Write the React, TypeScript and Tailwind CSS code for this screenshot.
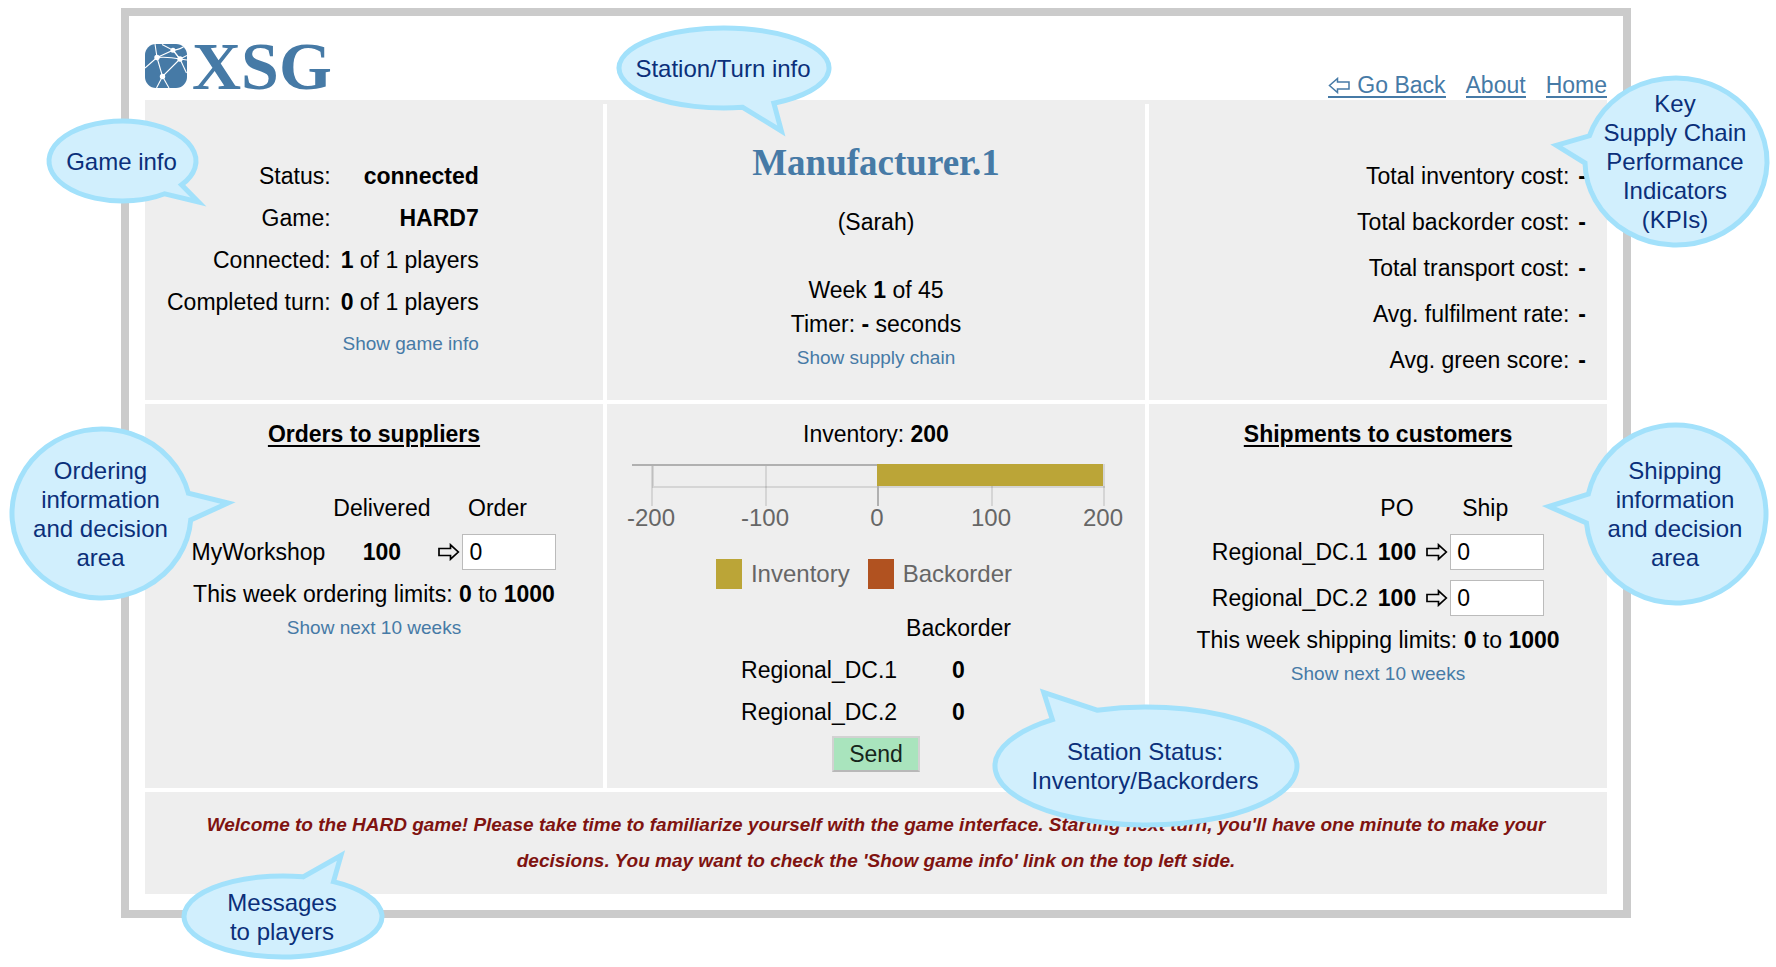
import React from "react";

type Point = [number, number];

interface CalloutProps {
  className: string;
  width: number;
  height: number;
  /** Points where the tail leaves the ellipse, clockwise, and its tip. */
  from: Point;
  to: Point;
  tip: Point;
  lines: string[];
}

const STROKE = 5;

function Callout({ className, width, height, from, to, tip, lines }: CalloutProps) {
  const cx = width / 2;
  const cy = height / 2;
  const rx = cx - 3;
  const ry = cy - 3;
  const snap = ([x, y]: Point): Point => {
    const a = Math.atan2((y - cy) / ry, (x - cx) / rx);
    return [cx + rx * Math.cos(a), cy + ry * Math.sin(a)];
  };
  const start = snap(to);
  const end = snap(from);
  const d = `M${start} A${rx} ${ry} 0 1 1 ${end} L${tip} Z`;

  return (
    <div
      className={`absolute flex items-center justify-center pr-[2px] ${className}`}
      style={{ width, height }}
    >
      <svg
        className="absolute inset-0 overflow-visible"
        width={width}
        height={height}
        viewBox={`0 0 ${width} ${height}`}
        aria-hidden="true"
      >
        <path d={d} fill="#d1effd" stroke="#a2e1fb" strokeWidth={STROKE} strokeMiterlimit={10} />
      </svg>
      <p className="relative text-center text-[24px] leading-[29px] whitespace-nowrap text-[#0b2f7a]">
        {lines.map((line) => (
          <span key={line} className="block">
            {line}
          </span>
        ))}
      </p>
    </div>
  );
}

function Logo() {
  return (
    <svg width="42" height="44" viewBox="0 0 42 44" aria-hidden="true">
      <defs>
        <clipPath id="tile">
          <rect width="42" height="44" rx="11" />
        </clipPath>
      </defs>
      <g clipPath="url(#tile)">
        <rect width="42" height="44" fill="#467aa6" />
        <g fill="none" stroke="#fff" strokeWidth="1.1">
          <path d="M12 13.5 28 6.2 35 15Q23 12.500 12 13.500" />
          <path d="M10 0 12 13.500 0 24" />
          <path d="M12 13.500 17.500 32.500 35 15" />
          <path d="M11.500 44 17.500 32.500 24 44" />
          <path d="M17 0.500 28 6.200Q36 5.500 40 1.500" />
          <path d="M28 6.200 35 15 42 11.500" />
          <path d="M35 15 42 16" />
          <path d="M35 15 41.500 29" />
        </g>
        <g fill="#fff">
          <circle cx="12" cy="13.500" r="2.700" />
          <circle cx="28" cy="6.200" r="2.500" />
          <circle cx="35" cy="15" r="2.700" />
          <circle cx="17.500" cy="32.500" r="2.700" />
        </g>
      </g>
    </svg>
  );
}

function Arrow() {
  return (
    <svg width="22" height="18" viewBox="0 0 22 18" aria-hidden="true">
      <path
        d="M1 5.500H12.500V1.800L20.300 9L12.500 16.200V12.500H1Z"
        fill="none"
        stroke="#000"
        strokeWidth="1.700"
      />
    </svg>
  );
}

function BackArrow() {
  return (
    <svg className="mr-[7px] inline-block align-baseline" width="22" height="17" viewBox="0 0 22 17" aria-hidden="true">
      <path
        d="M21 5H9.500V1.500L1.500 8.500L9.500 15.500V12H21Z"
        fill="none"
        stroke="#467aa6"
        strokeWidth="1.500"
      />
    </svg>
  );
}

function SmallLink({ children }: { children: React.ReactNode }) {
  return (
    <a href="#" className="text-[19px] text-[#467aa6]">
      {children}
    </a>
  );
}

interface OrderTableProps {
  title: string;
  amountHeader: string;
  inputHeader: string;
  rows: string[];
  verb: string;
}

function OrderPanel({ title, amountHeader, inputHeader, rows, verb }: OrderTableProps) {
  return (
    <section className="flex flex-col items-center bg-[#eee] pt-[13px]">
      <h2 className="leading-[34px] font-bold underline decoration-2 underline-offset-3">{title}</h2>
      <table className="mt-9 mb-[2px]">
        <thead>
          <tr className="h-[42px]">
            <td />
            <th className="px-2 py-0 font-normal">{amountHeader}</th>
            <th className="p-0 font-normal">{inputHeader}</th>
          </tr>
        </thead>
        <tbody>
          {rows.map((name) => (
            <tr key={name} className="h-[46px]">
              <td className="p-0">
                <label htmlFor={`${verb}-${name}`}>{name}</label>
              </td>
              <td className="px-[10px] py-0 text-center font-bold">100</td>
              <td className="p-0">
                <div className="flex items-center gap-[2px]">
                  <Arrow />
                  <input
                    id={`${verb}-${name}`}
                    type="text"
                    defaultValue="0"
                    className="h-9 w-[94px] border border-[#bbb] bg-white px-[6px]"
                  />
                </div>
              </td>
            </tr>
          ))}
        </tbody>
      </table>
      <p className="leading-[34px]">
        This week {verb} limits: <b>0</b> to <b>1000</b>
      </p>
      <p className="leading-[30px]">
        <SmallLink>Show next 10 weeks</SmallLink>
      </p>
    </section>
  );
}

const TICKS = [
  { x: 32, label: "-200" },
  { x: 146, label: "-100" },
  { x: 258, label: "0" },
  { x: 372, label: "100" },
  { x: 484, label: "200" },
];

function InventoryChart() {
  return (
    <svg
      className="mt-[13px]"
      width="512"
      height="68"
      viewBox="0 0 512 68"
      role="img"
      aria-label="Inventory level"
    >
      <g fill="#000" fillOpacity="0.1">
        <rect x="31" y="0" width="2" height="42" />
        <rect x="145" y="0" width="2" height="42" />
        <rect x="371" y="0" width="2" height="42" />
        <rect x="483" y="0" width="2" height="42" />
        <rect x="32" y="22" width="453" height="2" />
        <rect x="32" y="2" width="2" height="20" />
      </g>
      <rect x="12" y="0" width="246" height="2" fill="#b0b0b0" />
      <rect x="257" y="0" width="2" height="42" fill="#b0b0b0" />
      <rect x="257" y="0" width="226" height="22" fill="#bba537" />
      {TICKS.map((t) => (
        <text key={t.label} x={t.x - 1} y="62" textAnchor="middle" fontSize="24" fill="#666">
          {t.label}
        </text>
      ))}
    </svg>
  );
}

const KPIS = [
  "Total inventory cost:",
  "Total backorder cost:",
  "Total transport cost:",
  "Avg. fulfilment rate:",
  "Avg. green score:",
];

export default function App() {
  return (
    <div className="relative min-h-screen bg-white py-2 pr-[145px] pl-[121px] font-['Liberation_Sans',Arial,sans-serif] text-[23px] text-black">
      <main className="border-8 border-[#cbcbcb] p-4 pt-0">
        <header className="flex h-[84px] items-end justify-between">
          <div className="flex items-center gap-[5px] text-[#467aa6]">
            <Logo />
            <span className="font-['Liberation_Serif',serif] text-[68px] leading-[68px] font-bold">XSG</span>
          </div>
          <nav className="flex gap-5 pb-[2px] leading-[21px] text-[#467aa6]">
            <a href="#" className="flex items-center border-b-2 border-[#467aa6]">
              <BackArrow />
              Go Back
            </a>
            <a href="#" className="border-b-2 border-[#467aa6]">
              About
            </a>
            <a href="#" className="border-b-2 border-[#467aa6]">
              Home
            </a>
          </nav>
        </header>

        <div className="h-1 bg-[#eee]" />

        <div className="grid grid-cols-[458fr_538fr_458fr] grid-rows-[296px_384px_auto] gap-1">
          <section className="bg-[#eee] pt-[51px] pl-[22px]">
            <table className="text-right leading-[42px]">
              <tbody>
                <tr>
                  <td className="p-0 pr-[10px]">Status:</td>
                  <td className="p-0 font-bold">connected</td>
                </tr>
                <tr>
                  <td className="p-0 pr-[10px]">Game:</td>
                  <td className="p-0 font-bold">HARD7</td>
                </tr>
                <tr>
                  <td className="p-0 pr-[10px]">Connected:</td>
                  <td className="p-0">
                    <b>1</b> of 1 players
                  </td>
                </tr>
                <tr>
                  <td className="p-0 pr-[10px]">Completed turn:</td>
                  <td className="p-0">
                    <b>0</b> of 1 players
                  </td>
                </tr>
                <tr>
                  <td />
                  <td className="p-0 leading-[38px]">
                    <SmallLink>Show game info</SmallLink>
                  </td>
                </tr>
              </tbody>
            </table>
          </section>

          <section className="bg-[#eee] pt-[39px] text-center leading-[34px]">
            <h1 className="mb-[22px] font-['Liberation_Serif',serif] text-[37px] leading-10 font-bold text-[#467aa6]">
              Manufacturer.1
            </h1>
            <p className="mb-[34px]">(Sarah)</p>
            <p>
              Week <b>1</b> of 45
            </p>
            <p>
              Timer: <b>-</b> seconds
            </p>
            <p className="leading-[30px]">
              <SmallLink>Show supply chain</SmallLink>
            </p>
          </section>

          <section className="flex justify-end bg-[#eee] pt-[49px] pr-[21px]">
            <table className="self-start text-right leading-[46px]">
              <tbody>
                {KPIS.map((kpi) => (
                  <tr key={kpi}>
                    <td className="p-0 pr-[9px]">{kpi}</td>
                    <td className="p-0 font-bold">-</td>
                  </tr>
                ))}
              </tbody>
            </table>
          </section>

          <OrderPanel
            title="Orders to suppliers"
            amountHeader="Delivered"
            inputHeader="Order"
            rows={["MyWorkshop"]}
            verb="ordering"
          />

          <section className="flex flex-col items-center bg-[#eee] pt-[13px]">
            <p className="leading-[34px]">
              Inventory: <b>200</b>
            </p>
            <InventoryChart />
            <div className="mt-[27px] flex h-[30px] items-center gap-[18px] pr-6 text-[24px] text-[#666]">
              <span className="flex items-center gap-[9px]">
                <span className="h-[30px] w-[26px] bg-[#bba537]" />
                Inventory
              </span>
              <span className="flex items-center gap-[9px]">
                <span className="h-[30px] w-[26px] bg-[#b15220]" />
                Backorder
              </span>
            </div>
            <table className="mt-[18px] mb-[3px] leading-[42px]">
              <thead>
                <tr>
                  <td />
                  <th className="p-0 font-normal">Backorder</th>
                </tr>
              </thead>
              <tbody>
                {["Regional_DC.1", "Regional_DC.2"].map((name) => (
                  <tr key={name}>
                    <td className="p-0 pr-[9px]">{name}</td>
                    <td className="p-0 text-center font-bold">0</td>
                  </tr>
                ))}
              </tbody>
            </table>
            <button
              type="button"
              className="h-9 border-2 border-[#d2d2d2] border-b-[#b8b8b8] bg-[#a9e4bd] px-[15px] leading-8 text-[#16251b]"
            >
              Send
            </button>
          </section>

          <OrderPanel
            title="Shipments to customers"
            amountHeader="PO"
            inputHeader="Ship"
            rows={["Regional_DC.1", "Regional_DC.2"]}
            verb="shipping"
          />

          <p className="col-span-3 bg-[#eee] px-5 py-[15px] text-center text-[19px] leading-9 font-bold text-[#7f1310] italic">
            Welcome to the HARD game! Please take time to familiarize yourself with the game interface. Starting next
            turn, you'll have one minute to make your decisions. You may want to check the 'Show game info' link on the
            top left side.
          </p>
        </div>
      </main>

      <Callout
        className="top-[118px] left-[46px]"
        width={153}
        height={86}
        from={[136, 67]}
        to={[119, 76]}
        tip={[152.5, 84]}
        lines={["Game info"]}
      />
      <Callout
        className="top-[25px] left-[calc(50%-272px)]"
        width={216}
        height={86}
        from={[159, 79]}
        to={[127, 83]}
        tip={[165.4, 106]}
        lines={["Station/Turn info"]}
      />
      <Callout
        className="top-[75px] right-[6px]"
        width={188}
        height={173}
        from={[3, 88]}
        to={[8, 61]}
        tip={[-25.6, 70.4]}
        lines={["Key", "Supply Chain", "Performance", "Indicators", "(KPIs)"]}
      />
      <Callout
        className="top-[426px] left-[9px]"
        width={185}
        height={175}
        from={[180, 67]}
        to={[183, 94]}
        tip={[219, 77]}
        lines={["Ordering", "information", "and decision", "area"]}
      />
      <Callout
        className="top-[422px] right-[7px]"
        width={186}
        height={184}
        from={[3, 101]}
        to={[5, 72]}
        tip={[-34, 84.5]}
        lines={["Shipping", "information", "and decision", "area"]}
      />
      <Callout
        className="top-[704px] left-[calc(50%+104px)]"
        width={308}
        height={124}
        from={[61, 16]}
        to={[104, 5]}
        tip={[51.7, -11.6]}
        lines={["Station Status:", "Inventory/Backorders"]}
      />
      <Callout
        className="top-[873px] left-[181px]"
        width={204}
        height={87}
        from={[122, 4]}
        to={[152, 9]}
        tip={[160, -17.5]}
        lines={["Messages", "to players"]}
      />
    </div>
  );
}
